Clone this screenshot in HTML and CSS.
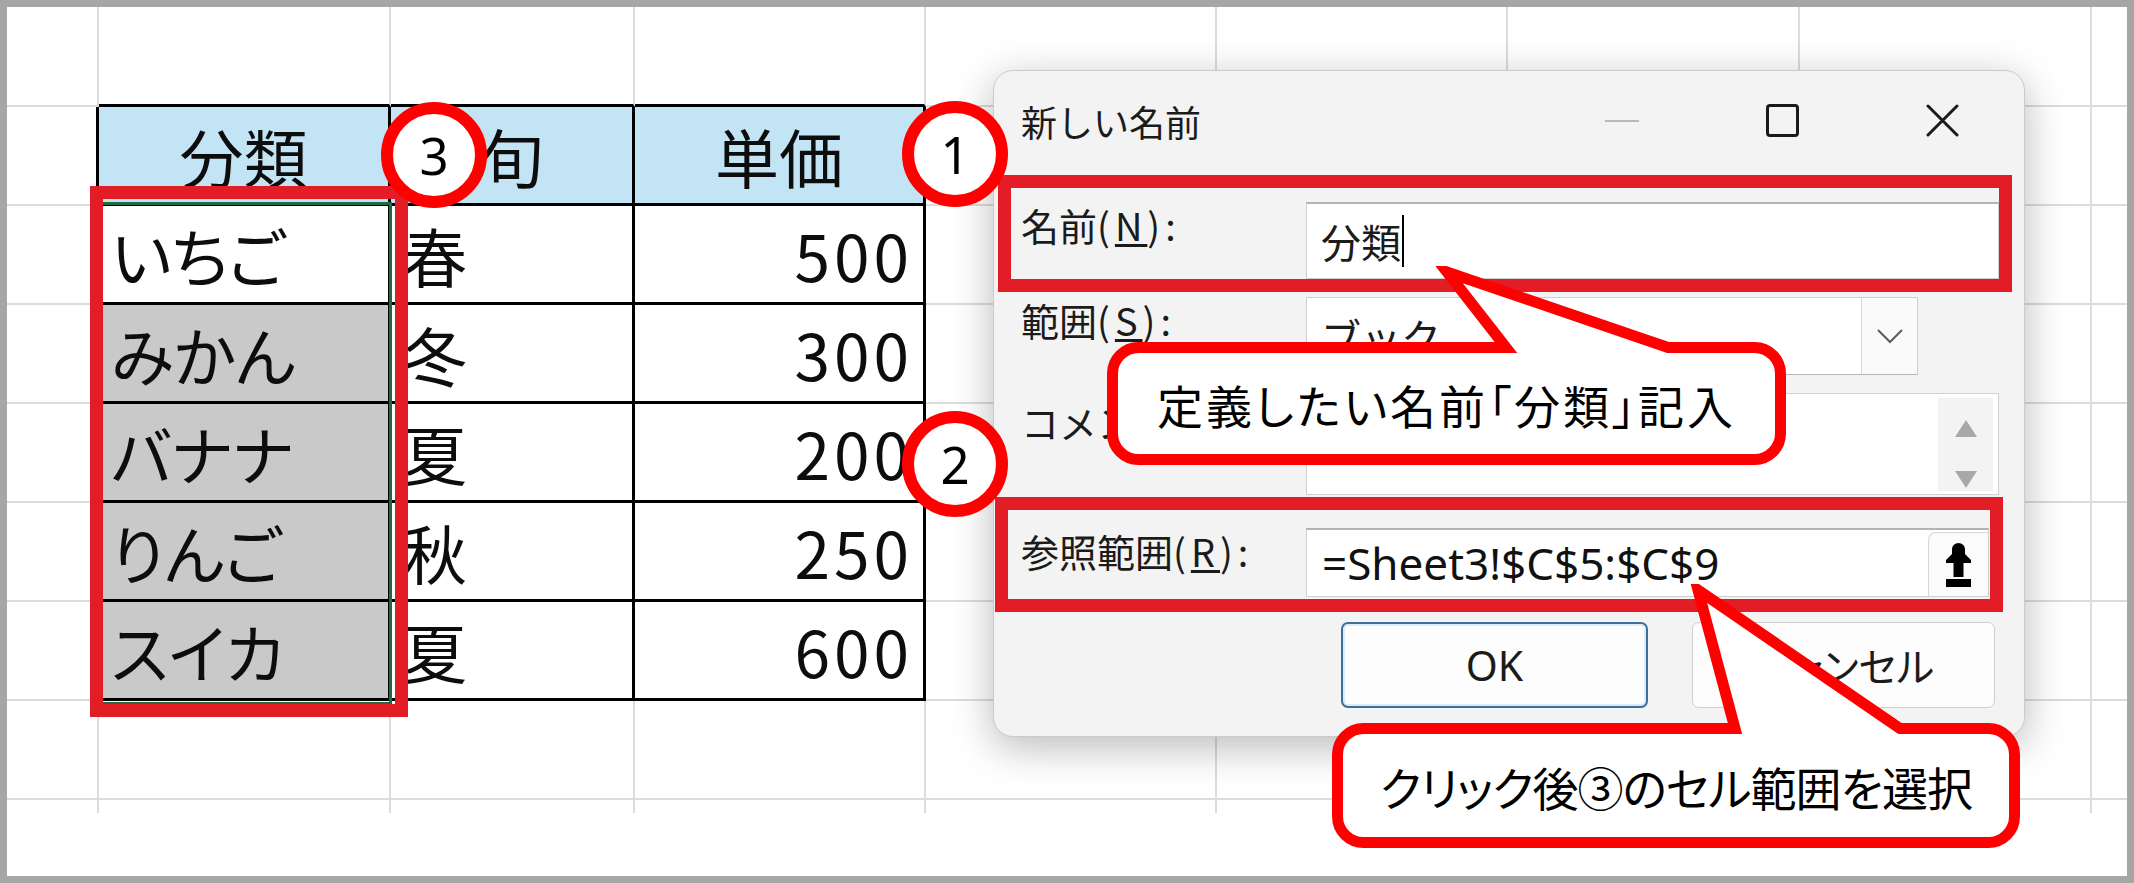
FILE: index.html
```html
<!DOCTYPE html>
<html lang="ja">
<head>
<meta charset="utf-8">
<title>新しい名前</title>
<link rel="stylesheet" href="styles.css">
</head>
<body>
<div class="frame">
  <div class="sheet">
    <div></div><div class="tb"></div><div class="tb"></div><div class="tb"></div><div></div><div></div><div></div><div></div><div></div>
    <div class="tl"></div><div class="t h">分類</div><div class="t h">旬</div><div class="t h">単価</div><div></div><div></div><div></div><div></div><div></div>
    <div class="tl"></div><div class="t l">いちご</div><div class="t l">春</div><div class="t r">500</div><div></div><div></div><div></div><div></div><div></div>
    <div class="tl"></div><div class="t l g">みかん</div><div class="t l">冬</div><div class="t r">300</div><div></div><div></div><div></div><div></div><div></div>
    <div class="tl"></div><div class="t l g">バナナ</div><div class="t l">夏</div><div class="t r">200</div><div></div><div></div><div></div><div></div><div></div>
    <div class="tl"></div><div class="t l g">りんご</div><div class="t l">秋</div><div class="t r">250</div><div></div><div></div><div></div><div></div><div></div>
    <div class="tl"></div><div class="t l g">スイカ</div><div class="t l">夏</div><div class="t r">600</div><div></div><div></div><div></div><div></div><div></div>
    <div></div><div></div><div></div><div></div><div></div><div></div><div></div><div></div><div></div>
    <div></div><div></div><div></div><div></div><div></div><div></div><div></div><div></div><div></div>
  </div>

  <div class="sel"></div>
  <div class="redbox rb-sel"></div>

  <div class="dialog">
    <div class="titlebar">
      <div class="title">新しい名前</div>
      <div class="wctl">
        <div class="wbtn"><div class="min"></div></div>
        <div class="wbtn"><div class="max"></div></div>
        <div class="wbtn"><svg width="33" height="33" viewBox="0 0 33 33"><path d="M2 2L31 31M31 2L2 31" stroke="#1a1a1a" stroke-width="3" stroke-linecap="round"/></svg></div>
      </div>
    </div>
    <div class="row r-name">
      <div class="lbl">名前<span>(<u>N</u>):</span></div>
      <div class="inp i-name">分類<i class="caret"></i></div>
    </div>
    <div class="row r-scope">
      <div class="lbl">範囲<span>(<u>S</u>):</span></div>
      <div class="select">
        <div class="v">ブック</div>
        <div class="dd"><svg width="26" height="15" viewBox="0 0 26 15"><path d="M1 1L13 13L25 1" fill="none" stroke="#5c5c5c" stroke-width="2"/></svg></div>
      </div>
    </div>
    <div class="row r-comment">
      <div class="lbl lbl-c">コメン<span class="hid">ト(<u>O</u>):</span></div>
      <div class="ta">
        <div class="sb"><i class="tri-up"></i><i class="tri-dn"></i></div>
      </div>
    </div>
    <div class="row r-ref">
      <div class="lbl">参照範囲<span>(<u>R</u>):</span></div>
      <div class="inp i-ref">
        <div class="v">=Sheet3!$C$5:$C$9</div>
        <div class="refbtn"><svg width="25" height="44" viewBox="0 0 25 44"><path d="M6 6A6.5 6 0 0 1 19 6V11L25 17V20H17.5V34H7.5V20H0V17L6 11Z" fill="#000"/><rect x="0" y="36" width="25" height="8" fill="#000"/></svg></div>
      </div>
    </div>
    <div class="btns">
      <div class="btn ok">OK</div>
      <div class="btn cancel">キャンセル</div>
    </div>
  </div>

  <div class="redbox rb-name"></div>
  <div class="redbox rb-ref"></div>

  <div class="num n3">3</div>
  <div class="num n1">1</div>
  <div class="num n2">2</div>

  <div class="callout co1">
    <svg width="679" height="199" viewBox="0 0 679 199"><path d="M31.5 81.5H399L340 6L561 81.5H647.5A26 26 0 0 1 673.5 107.5V167.5A26 26 0 0 1 647.5 193.5H31.5A26 26 0 0 1 5.5 167.5V107.5A26 26 0 0 1 31.5 81.5Z" fill="#fff" stroke="#ff0000" stroke-width="11" stroke-linejoin="miter" stroke-miterlimit="10"/></svg>
    <p class="t1">定義したい名前「分類」記入</p>
  </div>
  <div class="callout co2">
    <svg width="688" height="264" viewBox="0 0 688 264"><path d="M31.5 144.5H403L366 6L568 144.5H656.5A26 26 0 0 1 682.5 170.5V232.5A26 26 0 0 1 656.5 258.5H31.5A26 26 0 0 1 5.5 232.5V170.5A26 26 0 0 1 31.5 144.5Z" fill="#fff" stroke="#ff0000" stroke-width="11" stroke-linejoin="miter" stroke-miterlimit="10"/></svg>
    <p class="t2">クリック後③のセル範囲を選択</p>
  </div>
</div>
</body>
</html>
```

FILE: styles.css
```css
* { box-sizing: border-box; }
html, body { margin: 0; padding: 0; background: #fff; }
body { font-family: "Noto Sans CJK JP", sans-serif; color: #111; }

.frame {
  position: relative;
  width: 2134px;
  height: 883px;
  border: 7px solid #a6a6a6;
  background: #fff;
  overflow: hidden;
}

/* spreadsheet grid */
.sheet {
  display: grid;
  grid-template-columns: 92px 292px 244px 291px 291px 291px 292px 292px 35px;
  grid-template-rows: 100px repeat(7, 99px) 13px;
}
.sheet > div {
  border-right: 2px solid #dcdcdc;
  border-bottom: 2px solid #dcdcdc;
}
.sheet > div:nth-child(9n) { border-right: none; }
.sheet > div:nth-last-child(-n+9) { border-bottom: none; }
.sheet > .tb { border-bottom: 3px solid #000; }
.sheet > .tl { border-right: 3px solid #000; }
.sheet > .t {
  border-right: 3px solid #000;
  border-bottom: 3px solid #000;
  display: flex;
  align-items: center;
  font-size: 64px;
  line-height: 1;
  color: #0d0d0d;
  font-feature-settings: "palt";
}
.h { background: #c3e4f5; justify-content: center; }
.l { padding-left: 12px; }
.r { justify-content: flex-end; padding-right: 10px; letter-spacing: 4px; }
.g { background: #c9c9c9; }

/* excel selection */
.sel {
  position: absolute;
  left: 90px; top: 195px;
  width: 295px; height: 503px;
  border: 3px solid #1d6b40;
}

/* red highlight rectangles */
.redbox { position: absolute; border: 13px solid #e31d25; }
.rb-sel { left: 83px; top: 179px; width: 318px; height: 531px; }
.rb-name { left: 991px; top: 168px; width: 1014px; height: 117px; }
.rb-ref { left: 988px; top: 490px; width: 1008px; height: 115px; }

/* numbered circles */
.num {
  position: absolute;
  width: 106px; height: 106px;
  border: 12px solid #ff0000;
  border-radius: 50%;
  background: #fff;
  display: flex;
  align-items: center;
  justify-content: center;
  font-family: "Noto Sans", sans-serif;
  font-size: 51px;
  line-height: 1;
  color: #000;
}
.n3 { left: 374px; top: 95px; }
.n1 { left: 895px; top: 94px; }
.n2 { left: 895px; top: 404px; }

/* dialog window */
.dialog {
  position: absolute;
  left: 986px; top: 63px;
  width: 1032px; height: 667px;
  background: #f3f3f3;
  border: 1px solid #cacaca;
  border-radius: 20px;
  box-shadow: 0 10px 42px rgba(0, 0, 0, 0.28);
  color: #1b1b1b;
}
.titlebar {
  height: 99px;
  display: flex;
  align-items: center;
  padding-left: 27px;
}
.title { font-size: 36px; line-height: 1; }
.wctl { margin-left: auto; margin-right: 2px; display: flex; }
.wbtn {
  width: 160px; height: 60px;
  display: flex; align-items: center; justify-content: center;
}
.min { width: 34px; height: 2px; background: #b9b9b9; }
.max { width: 33px; height: 33px; border: 3px solid #1a1a1a; border-radius: 4px; }

.row { display: flex; padding-left: 27px; }
.lbl { width: 285px; flex: none; font-size: 38px; line-height: 1; padding-top: 4px; white-space: nowrap; }
.lbl span { letter-spacing: 5px; }
.lbl u { text-underline-offset: 3px; }
.lbl-c { padding-top: 10px; }
.lbl .hid { visibility: hidden; }
.r-name { margin-top: 32px; height: 77px; }
.r-scope { margin-top: 18px; height: 78px; }
.r-comment { margin-top: 18px; height: 102px; }
.r-ref { margin-top: 33px; height: 69px; }

.inp {
  background: #fff;
  border: 1px solid #cfcfcf;
  border-top: 2px solid #b3b3b3;
  display: flex;
  align-items: center;
}
.i-name { width: 693px; height: 77px; padding-left: 14px; font-size: 40px; line-height: 1; }
.caret { display: inline-block; width: 2px; height: 52px; background: #000; margin-left: 1px; }

.select {
  width: 612px; height: 78px;
  background: #fff;
  border: 1px solid #cfcfcf;
  border-bottom-color: #b8b8b8;
  display: flex;
}
.select .v { flex: 1; display: flex; align-items: center; padding-left: 14px; font-size: 40px; line-height: 1; }
.select .dd {
  width: 56px;
  border-left: 1px solid #dadada;
  background: #fafafa;
  display: flex; align-items: center; justify-content: center;
}

.ta {
  width: 693px; height: 102px;
  background: #fff;
  border: 1px solid #cfcfcf;
  display: flex;
  justify-content: flex-end;
}
.sb {
  width: 55px;
  margin: 4px 5px 3px 0;
  background: #f3f3f3;
  display: flex;
  flex-direction: column;
  justify-content: space-between;
  align-items: center;
  padding: 22px 0 3px;
}
.tri-up { width: 0; height: 0; border-left: 11px solid transparent; border-right: 11px solid transparent; border-bottom: 17px solid #a8a8a8; }
.tri-dn { width: 0; height: 0; border-left: 11px solid transparent; border-right: 11px solid transparent; border-top: 17px solid #a8a8a8; }

.i-ref { width: 683px; height: 69px; align-items: stretch; }
.i-ref .v {
  flex: 1;
  display: flex; align-items: center;
  padding-left: 15px;
  font-family: "Noto Sans", sans-serif;
  font-size: 44px;
  line-height: 1;
  color: #111;
}
.refbtn {
  width: 60px;
  margin-top: 2px;
  border: 1px solid #d6d6d6;
  border-right: none;
  border-bottom: none;
  border-radius: 8px 0 0 0;
  background: #fbfbfb;
  display: flex; align-items: center; justify-content: center;
}

.btns {
  display: flex;
  justify-content: flex-end;
  gap: 44px;
  margin-top: 25px;
  padding-right: 29px;
}
.btn {
  height: 86px;
  border-radius: 7px;
  background: #fdfdfd;
  display: flex; align-items: center; justify-content: center;
  font-size: 40px;
  line-height: 1;
  color: #1b1b1b;
}
.ok {
  width: 307px;
  border: 2px solid #3e6f9c;
  box-shadow: inset 0 0 0 2px #dcebf6;
  font-family: "Noto Sans", sans-serif;
  font-size: 41px;
}
.cancel { width: 303px; border: 1px solid #cfcfcf; font-feature-settings: "palt"; }

/* callouts */
.callout {
  position: absolute;
  display: flex;
  align-items: center;
  justify-content: center;
  font-size: 46px;
  line-height: 1;
  color: #000;
  font-feature-settings: "palt";
}
.callout svg { position: absolute; left: 0; top: 0; }
.callout p { position: relative; margin: 0; }
.co1 { left: 1100px; top: 259px; width: 679px; height: 199px; padding-top: 76px; }
.co2 { left: 1325px; top: 577px; width: 688px; height: 264px; padding-top: 139px; }
.t1 { letter-spacing: 3px; }
.t2 { letter-spacing: -1px; }
```
